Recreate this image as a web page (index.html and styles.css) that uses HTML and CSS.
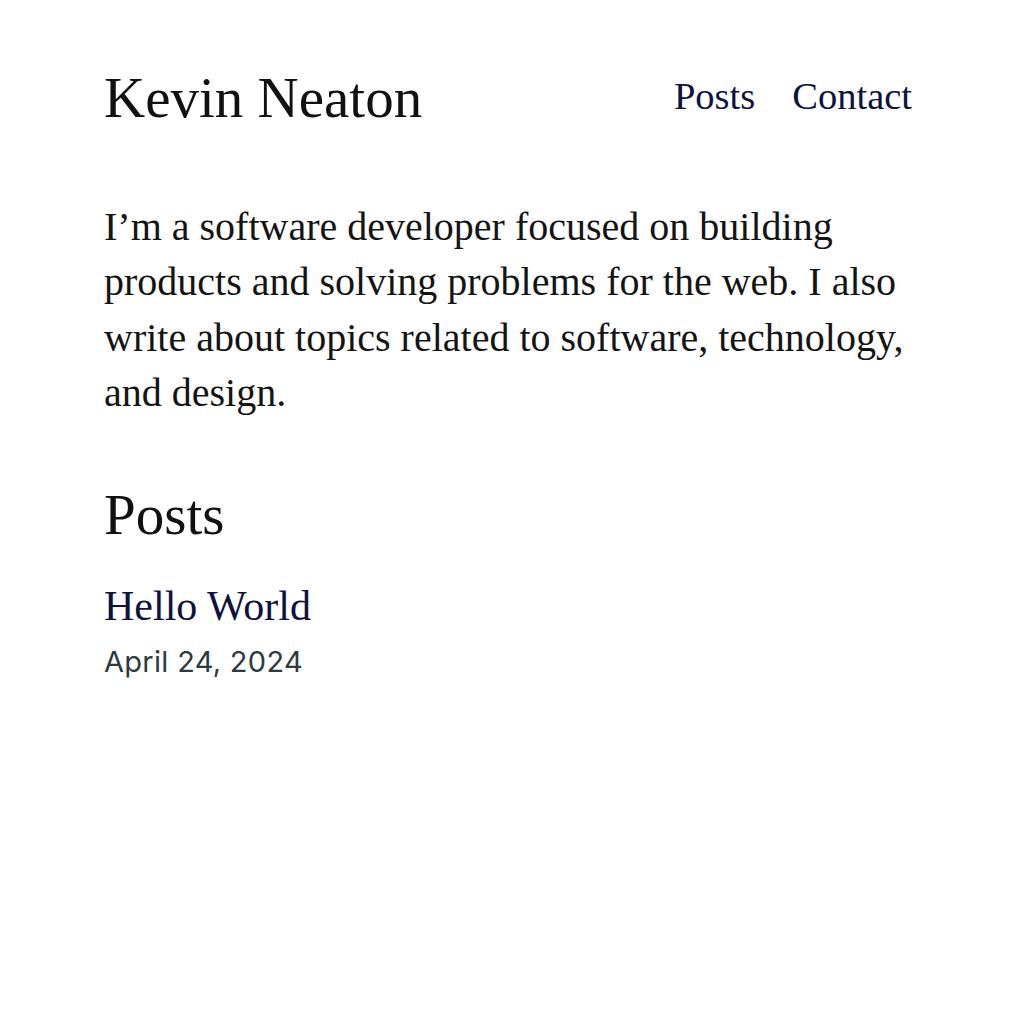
FILE: index.html
```html
<!DOCTYPE html>
<html lang="en">
<head>
<meta charset="utf-8">
<title>Kevin Neaton</title>
<link rel="stylesheet" href="styles.css">
</head>
<body>
<div class="page">
  <header class="site-header">
    <a class="site-title" href="#">Kevin Neaton</a>
    <nav class="site-nav">
      <a href="#">Posts</a>
      <a href="#">Contact</a>
    </nav>
  </header>
  <main>
    <p class="intro">I’m a software developer focused on building products and solving problems for the web. I also write about topics related to software, technology, and design.</p>
    <section class="posts">
      <h2 class="posts-title">Posts</h2>
      <article class="post">
        <a class="post-link" href="#">Hello World</a>
        <time class="post-date">April 24, 2024</time>
      </article>
    </section>
  </main>
</div>
</body>
</html>
```
FILE: styles.css
```css
html, body {
  margin: 0;
  padding: 0;
  background: #ffffff;
}
body {
  font-family: "Liberation Serif", "Times New Roman", serif;
  color: #111111;
}
.page {
  width: 808px;
  margin: 0 auto 0 104px;
  padding-top: 66px;
}
a { text-decoration: none; }
.site-header {
  display: flex;
  justify-content: space-between;
  align-items: center;
}
.site-title {
  font-size: 57px;
  line-height: 64px;
  color: #111111;
}
.site-nav {
  display: flex;
  gap: 37px;
  padding-bottom: 4px;
}
.site-nav a {
  font-size: 38.5px;
  line-height: 44px;
  color: #0d1240;
}
.intro {
  margin: 69px 0 0;
  font-size: 40px;
  line-height: 55.3px;
  color: #141414;
}
.posts-title {
  margin: 63px 0 0;
  font-size: 57px;
  line-height: 64px;
  font-weight: normal;
  color: #111111;
}
.post {
  display: flex;
  flex-direction: column;
  margin-top: 34px;
}
.post-link {
  font-size: 42px;
  line-height: 50px;
  color: #0d1240;
}
.post-date {
  font-family: "Inter", "Open Sans", sans-serif;
  font-size: 29px;
  line-height: 40px;
  letter-spacing: 0.3px;
  color: #2c3a42;
  margin-top: 11px;
}
```
